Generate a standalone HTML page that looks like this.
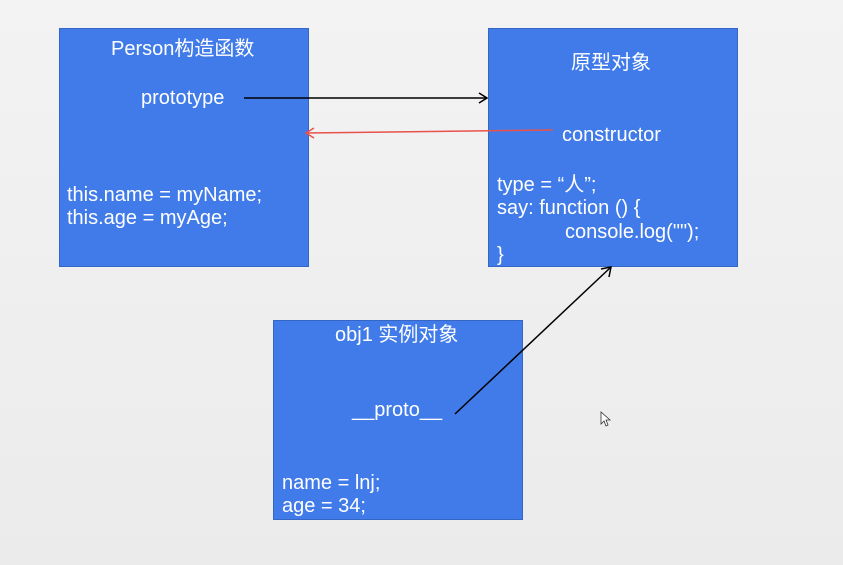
<!DOCTYPE html>
<html><head><meta charset="utf-8"><style>
body{margin:0;width:843px;height:565px;background:linear-gradient(#f3f3f3,#ebebeb);position:relative;overflow:hidden;font-family:"Liberation Sans","Noto Sans CJK SC",sans-serif;color:#fff;font-size:20px}
.b{position:absolute;background:#407be9;border:1px solid #3566c4;box-sizing:border-box}
.t{position:absolute;white-space:pre;line-height:23px}
svg{position:absolute;left:0;top:0}
</style></head><body>
<div class="b" style="left:59px;top:28px;width:250px;height:239px"></div>
<div class="b" style="left:488px;top:28px;width:250px;height:239px"></div>
<div class="b" style="left:273px;top:320px;width:250px;height:200px"></div>
<div class="t" style="left:111px;top:38px">Person构造函数</div>
<div class="t" style="left:141px;top:87px">prototype</div>
<div class="t" style="left:67px;top:184px">this.name = myName;
this.age = myAge;</div>
<div class="t" style="left:571px;top:52px">原型对象</div>
<div class="t" style="left:562px;top:124px">constructor</div>
<div class="t" style="left:497px;top:174px">type = “人”;
say: function () {</div>
<div class="t" style="left:565px;top:221px">console.log("");</div>
<div class="t" style="left:497px;top:244px">}</div>
<div class="t" style="left:335px;top:324px">obj1 实例对象</div>
<div class="t" style="left:352px;top:399px">__proto__</div>
<div class="t" style="left:282px;top:472px">name = lnj;
age = 34;</div>
<svg width="843" height="565">
<line x1="244" y1="98" x2="487" y2="98" stroke="#000" stroke-width="1.5"/>
<polyline points="479,93 487,98 479,103" fill="none" stroke="#000" stroke-width="1.5"/>
<line x1="553" y1="130" x2="306" y2="133" stroke="#e8524a" stroke-width="1.5"/>
<polyline points="314,128 306,133 314,138" fill="none" stroke="#e8524a" stroke-width="1.5"/>
<line x1="455" y1="414" x2="611" y2="267" stroke="#000" stroke-width="1.5"/>
<polyline points="601,269 611,267 609,277" fill="none" stroke="#000" stroke-width="1.5"/>
<path d="M601,412 L601,424 L604,421 L606,426 L608,425 L606,420 L610,420 Z" fill="#fff" stroke="#333" stroke-width="0.8"/>
</svg>
</body></html>
